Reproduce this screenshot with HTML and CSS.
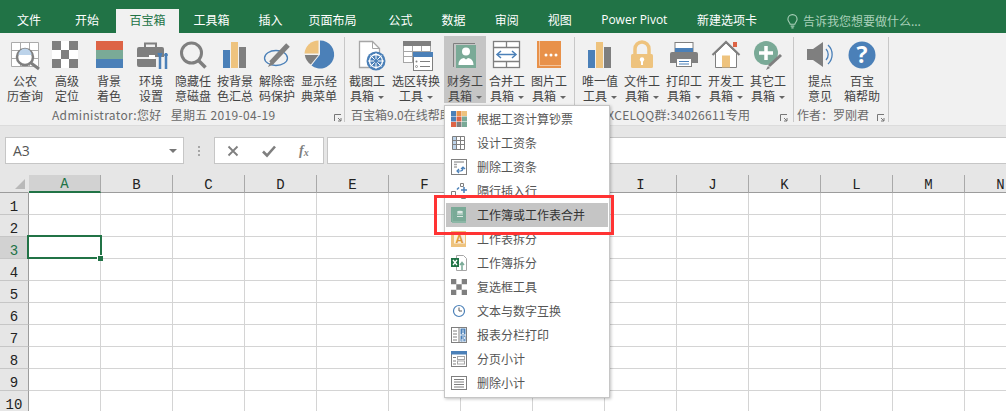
FILE: index.html
```html
<!DOCTYPE html>
<html lang="zh">
<head>
<meta charset="utf-8">
<title>百宝箱</title>
<link rel="stylesheet" href="styles.css">
</head>
<body>
<nav class="tabs">
  <span class="tab tab-first">文件</span>
  <span class="tab">开始</span>
  <span class="tab tab-active">百宝箱</span>
  <span class="tab">工具箱</span>
  <span class="tab">插入</span>
  <span class="tab tab-wide">页面布局</span>
  <span class="tab">公式</span>
  <span class="tab">数据</span>
  <span class="tab">审阅</span>
  <span class="tab">视图</span>
  <span class="tab tab-latin">Power Pivot</span>
  <span class="tab">新建选项卡</span>
  <span class="tell">
    <svg class="bulb" viewBox="0 0 12 16"><path d="M3.5 11C3 9 1 8 1 5.5a5 5 0 0 1 10 0C11 8 9 9 8.500 11z" fill="none" stroke="#a9d0b9" stroke-width="1.200"/><path d="M4 13h4M4.800 15h2.400" stroke="#a9d0b9" stroke-width="1.200"/></svg>
    告诉我您想要做什么...
  </span>
</nav>

<section class="ribbon">
  <div class="group group-one">
    <div class="buttons">
      <div class="btn"><svg class="ico" viewBox="0 0 36 30"><path d="M4.500 2.500h27v24h-27zM4.500 10.500h27M4.500 18.500h27M13.500 2.500v24M22.500 2.500v24" fill="#fff" stroke="#ababab"/><circle cx="18" cy="17" r="8" fill="#fff" stroke="#7f7f7f" stroke-width="2.500"/><path d="M11.500 15a6.500 6.500 0 0 1 13 0z" fill="#bcd3ea"/><path d="M24 23l8 6" stroke="#7f7f7f" stroke-width="3"/></svg><span class="label">公农<br>历查询</span></div>
      <div class="btn"><svg class="ico" viewBox="0 0 36 30"><rect x="3" y="1" width="26" height="27" fill="#fff"/><path d="M3 1h9v9H3zM20 1h9v9h-9zM12 10h8v9h-8zM3 19h9v9H3zM20 19h9v9h-9z" fill="#7f7f7f"/></svg><span class="label">高级<br>定位</span></div>
      <div class="btn"><svg class="ico" viewBox="0 0 36 30"><rect x="5" y="1" width="27" height="9" fill="#dd6446"/><rect x="5" y="10" width="27" height="9" fill="#7aaa97"/><rect x="5" y="19" width="27" height="9" fill="#4b80b8"/></svg><span class="label">背景<br>着色</span></div>
      <div class="btn"><svg class="ico" viewBox="0 0 36 30"><path d="M12 7V3.500h11V7" fill="none" stroke="#7f7f7f" stroke-width="2"/><path d="M4 9a2 2 0 0 1 2-2h23a2 2 0 0 1 2 2v8H4zM4 19h19v8H6a2 2 0 0 1-2-2z" fill="#7f7f7f"/><rect x="16" y="15" width="6" height="4" fill="#fff"/><path d="M27 13v16M33 13v16" stroke="#4b80b8" stroke-width="2.500"/><path d="M25 13l2 4 2-4M31 15h4" fill="none" stroke="#4b80b8" stroke-width="1.500"/></svg><span class="label">环境<br>设置</span></div>
      <div class="btn"><svg class="ico" viewBox="0 0 36 30"><circle cx="16.500" cy="13" r="10" fill="#f1f1f1" stroke="#7f7f7f" stroke-width="3"/><path d="M23.500 20.500l7 7" stroke="#7f7f7f" stroke-width="3.500"/></svg><span class="label">隐藏任<br>意磁盘</span></div>
      <div class="btn"><svg class="ico" viewBox="0 0 36 30"><rect x="6" y="10" width="7" height="18" fill="#4b80b8"/><rect x="14" y="2" width="7" height="26" fill="#eec37e"/><rect x="22" y="7" width="7" height="21" fill="#7f7f7f"/></svg><span class="label">按背景<br>色汇总</span></div>
      <div class="btn"><svg class="ico" viewBox="0 0 36 30"><ellipse cx="17" cy="18" rx="11.500" ry="7.500" fill="none" stroke="#4b80b8" stroke-width="1.300"/><path d="M12 23L29 5" stroke="#7f7f7f" stroke-width="5"/><path d="M9 27l3-6 3 3z" fill="#7f7f7f"/></svg><span class="label">解除密<br>码保护</span></div>
      <div class="btn"><svg class="ico" viewBox="0 0 36 30"><path d="M19 .5a14 14 0 1 1-8.500 25l8.500-11z" fill="#4b80b8"/><path d="M17.500 .5v13H3.500a14 14 0 0 1 14-13z" fill="#eec37e"/><path d="M3.800 15h13.700l-7.700 9.500a14 14 0 0 1-6-9.500z" fill="#7f7f7f"/></svg><span class="label">显示经<br>典菜单</span></div>
    </div>
    <footer class="foot foot-one">Administrator:您好 &nbsp; 星期五 2019-04-19<svg class="launch" viewBox="0 0 8 8"><path d="M.5 7V.5H7M4 4l3 3M7 4v3H4" fill="none" stroke="#777"/></svg></footer>
  </div>

  <div class="group group-two">
    <div class="buttons">
      <div class="btn"><svg class="ico" viewBox="0 0 36 30"><path d="M10.500 1.500h13l7 7v19h-20z" fill="#fff" stroke="#a6a6a6" stroke-width="1.300"/><path d="M23.500 1.500v7h7" fill="none" stroke="#a6a6a6"/><circle cx="27" cy="21" r="9.500" fill="#4b80b8"/><circle cx="27" cy="21" r="6.500" fill="none" stroke="#fff" stroke-width="1.300"/><path d="M27 13v16M19 21h16M21.500 15.500l11 11M32.500 15.500l-11 11" stroke="#fff" stroke-width="1"/><circle cx="27" cy="21" r="2" fill="#4b80b8"/></svg><span class="label">截图工<br>具箱<i class="caret"></i></span></div>
      <div class="btn btn-wide"><svg class="ico" viewBox="0 0 36 30"><rect x="5.500" y="1.500" width="27" height="21" fill="#fff" stroke="#a6a6a6"/><rect x="5" y="1" width="28" height="5" fill="#7f7f7f"/><path d="M5.500 11.500h27M5.500 16.500h27M14.500 6v16M23.500 6v16" stroke="#a6a6a6"/><rect x="15.500" y="12.500" width="19" height="18" fill="#fff" stroke="#7f7f7f"/><rect x="15" y="12" width="20" height="5" fill="#4b80b8"/><path d="M22 21.500h10M22 26.500h10" stroke="#7f7f7f"/><circle cx="18.500" cy="21.500" r="1" fill="#7f7f7f"/><circle cx="18.500" cy="26.500" r="1" fill="none" stroke="#7f7f7f" stroke-width=".8"/></svg><span class="label">选区转换<br>工具<i class="caret"></i></span></div>
      <div class="btn btn-on"><svg class="ico" viewBox="0 0 36 30"><path d="M6.500 27V3.500H28" fill="none" stroke="#7f7f7f"/><rect x="9" y="5" width="20" height="23" fill="#7aaa97"/><circle cx="19" cy="11.500" r="4" fill="#fff"/><path d="M11.500 25c0-5 3-6.500 5.500-7l2 1.500 2-1.500c2.500.5 5.500 2 5.500 7z" fill="#fff"/></svg><span class="label">财务工<br>具箱<i class="caret"></i></span></div>
      <div class="btn"><svg class="ico" viewBox="0 0 36 30"><rect x="4.500" y="1.500" width="26" height="26" fill="#fff" stroke="#7f7f7f" stroke-width="1.300"/><path d="M4.500 7.500h26M4.500 21.500h26M17.500 1.500v6M17.500 21.500v6" stroke="#7f7f7f" stroke-width="1.300"/><path d="M9 14.500h17" stroke="#4b80b8" stroke-width="1.500"/><path d="M12 11l-4 3.500 4 3.500M23 11l4 3.500-4 3.500" fill="none" stroke="#4b80b8" stroke-width="1.500"/></svg><span class="label">合并工<br>具箱<i class="caret"></i></span></div>
      <div class="btn"><svg class="ico" viewBox="0 0 36 30"><rect x="6" y="1" width="24" height="27" fill="#e8914a"/><path d="M8.500 1v24.500H30" fill="none" stroke="#f4c49c"/><circle cx="15" cy="15" r="1.500" fill="#fff"/><circle cx="20" cy="15" r="1.500" fill="#fff"/><circle cx="25" cy="15" r="1.500" fill="#fff"/></svg><span class="label">图片工<br>具箱<i class="caret"></i></span></div>
    </div>
    <footer class="foot foot-two">百宝箱9.0在线帮助</footer>
  </div>

  <div class="group group-three">
    <div class="buttons">
      <div class="btn"><svg class="ico" viewBox="0 0 36 30"><rect x="6" y="10" width="7" height="18" fill="#4b80b8"/><rect x="14" y="2" width="7" height="26" fill="#eec37e"/><rect x="22" y="7" width="7" height="21" fill="#7f7f7f"/></svg><span class="label">唯一值<br>工具<i class="caret"></i></span></div>
      <div class="btn"><svg class="ico" viewBox="0 0 36 30"><path d="M11 15V9a7 7 0 0 1 14 0v6" fill="none" stroke="#eec37e" stroke-width="3.500"/><rect x="7" y="14" width="22" height="14" rx="1.500" fill="#eec37e"/><circle cx="18" cy="19.500" r="2.200" fill="#fff"/><rect x="17" y="20" width="2" height="5" fill="#fff"/></svg><span class="label">文件工<br>具箱<i class="caret"></i></span></div>
      <div class="btn"><svg class="ico" viewBox="0 0 36 30"><rect x="9" y="2.500" width="18" height="10" fill="#fff" stroke="#7f7f7f"/><rect x="9" y="8" width="18" height="4" fill="#4b80b8"/><path d="M6 12h24a2 2 0 0 1 2 2v9H4v-9a2 2 0 0 1 2-2z" fill="#7f7f7f"/><rect x="10.500" y="18.500" width="15" height="8" fill="#fff" stroke="#7f7f7f"/><path d="M13 21.500h10M13 24h10" stroke="#4b80b8"/></svg><span class="label">打印工<br>具箱<i class="caret"></i></span></div>
      <div class="btn"><svg class="ico" viewBox="0 0 36 30"><rect x="25" y="2" width="4" height="5" fill="#dd6446"/><path d="M7.500 13v14.500h21V13L18 3z" fill="#fff" stroke="#7f7f7f"/><path d="M4.500 15L18 2l13.500 13" fill="none" stroke="#7f7f7f" stroke-width="2.200"/><rect x="14" y="15.500" width="8" height="12" fill="#eec37e"/></svg><span class="label">开发工<br>具箱<i class="caret"></i></span></div>
      <div class="btn"><svg class="ico" viewBox="0 0 36 30"><circle cx="16" cy="13" r="12" fill="#7aaa97"/><path d="M16 6v14M9 13h14" stroke="#fff" stroke-width="3.500"/><path d="M19 26l12-11" stroke="#7f7f7f" stroke-width="3"/><path d="M16 30l2-4 2 2z" fill="#7f7f7f"/></svg><span class="label">其它工<br>具箱<i class="caret"></i></span></div>
    </div>
    <footer class="foot foot-three">EXCELQQ群:34026611专用<svg class="launch" viewBox="0 0 8 8"><path d="M.5 7V.5H7M4 4l3 3M7 4v3H4" fill="none" stroke="#777"/></svg></footer>
  </div>

  <div class="group group-four">
    <div class="buttons">
      <div class="btn"><svg class="ico" viewBox="0 0 36 30"><path d="M5 9h6l10-7v25l-10-7H5z" fill="#7f7f7f"/><path d="M24 9a8 8 0 0 1 0 11M26 5a13 13 0 0 1 0 19" fill="none" stroke="#4b80b8" stroke-width="1.300"/></svg><span class="label">提点<br>意见</span></div>
      <div class="btn"><svg class="ico" viewBox="0 0 36 30"><circle cx="18" cy="15" r="13.500" fill="#4b80b8"/><text class="qmark" x="18" y="23" text-anchor="middle">?</text></svg><span class="label">百宝<br>箱帮助</span></div>
    </div>
    <footer class="foot foot-four">作者：罗刚君<svg class="launch" viewBox="0 0 8 8"><path d="M.5 7V.5H7M4 4l3 3M7 4v3H4" fill="none" stroke="#777"/></svg></footer>
  </div>
</section>

<section class="formula">
  <div class="namebox"><span>A3</span><i class="namecaret"></i></div>
  <div class="grip"><i></i><i></i><i></i></div>
  <div class="fxbox">
    <svg class="fxico" viewBox="0 0 12 12"><path d="M1.500 1.500l9 9M10.500 1.500l-9 9" stroke="#7f7f7f" stroke-width="1.800"/></svg>
    <svg class="fxico" viewBox="0 0 14 12"><path d="M1 6.500l4 4 8-9" fill="none" stroke="#7f7f7f" stroke-width="2.600"/></svg>
    <span class="fxtext">f<sub>x</sub></span>
  </div>
  <div class="input"></div>
</section>

<section class="sheet">
  <table class="grid">
    <thead>
      <tr><th class="corner"><i class="tri"></i></th><th class="col-on">A</th><th>B</th><th>C</th><th>D</th><th>E</th><th>F</th><th>G</th><th>H</th><th>I</th><th>J</th><th>K</th><th>L</th><th>M</th><th>N</th></tr>
    </thead>
    <tbody>
      <tr><th>1</th><td></td><td></td><td></td><td></td><td></td><td></td><td></td><td></td><td></td><td></td><td></td><td></td><td></td><td></td></tr>
      <tr><th>2</th><td></td><td></td><td></td><td></td><td></td><td></td><td></td><td></td><td></td><td></td><td></td><td></td><td></td><td></td></tr>
      <tr><th class="row-on">3</th><td></td><td></td><td></td><td></td><td></td><td></td><td></td><td></td><td></td><td></td><td></td><td></td><td></td><td></td></tr>
      <tr><th>4</th><td></td><td></td><td></td><td></td><td></td><td></td><td></td><td></td><td></td><td></td><td></td><td></td><td></td><td></td></tr>
      <tr><th>5</th><td></td><td></td><td></td><td></td><td></td><td></td><td></td><td></td><td></td><td></td><td></td><td></td><td></td><td></td></tr>
      <tr><th>6</th><td></td><td></td><td></td><td></td><td></td><td></td><td></td><td></td><td></td><td></td><td></td><td></td><td></td><td></td></tr>
      <tr><th>7</th><td></td><td></td><td></td><td></td><td></td><td></td><td></td><td></td><td></td><td></td><td></td><td></td><td></td><td></td></tr>
      <tr><th>8</th><td></td><td></td><td></td><td></td><td></td><td></td><td></td><td></td><td></td><td></td><td></td><td></td><td></td><td></td></tr>
      <tr><th>9</th><td></td><td></td><td></td><td></td><td></td><td></td><td></td><td></td><td></td><td></td><td></td><td></td><td></td><td></td></tr>
      <tr><th>10</th><td></td><td></td><td></td><td></td><td></td><td></td><td></td><td></td><td></td><td></td><td></td><td></td><td></td><td></td></tr>
    </tbody>
  </table>
  <div class="selection"><i class="handle"></i></div>
</section>

<ul class="menu">
  <li><svg class="mico" viewBox="0 0 16 16"><rect x="0" y="0" width="5" height="5" fill="#4b80b8"/><rect x="5.500" y="0" width="5" height="5" fill="#e8914a"/><rect x="11" y="0" width="5" height="5" fill="#eec37e"/><rect x="0" y="5.500" width="5" height="5" fill="#4b80b8"/><rect x="5.500" y="5.500" width="5" height="5" fill="#dd6446"/><rect x="11" y="5.500" width="5" height="5" fill="#7aaa97"/><rect x="0" y="11" width="5" height="5" fill="#dd6446"/><rect x="5.500" y="11" width="5" height="5" fill="#7f7f7f"/><rect x="11" y="11" width="5" height="5" fill="#7aaa97"/></svg>根据工资计算钞票</li>
  <li><svg class="mico" viewBox="0 0 16 16"><rect x="1.500" y="1.500" width="4" height="13" fill="#bcd3ea"/><path d="M1.500 1.500h12v13h-12zM1.500 5.500h12M1.500 9.500h12M5.500 1.500v13M9.500 1.500v13" fill="none" stroke="#7f7f7f"/></svg>设计工资条</li>
  <li><svg class="mico" viewBox="0 0 16 16"><rect x=".5" y=".5" width="15" height="15" fill="#fff" stroke="#7f7f7f"/><path d="M3 3h10M3 5.500h3M3 8h3" stroke="#a6a6a6" stroke-width="1.300"/><path d="M6 12h3.500c2 0 2.500-1 2.500-3M10 10l2-2 2 2M8 10l-2 2 2 2" fill="none" stroke="#4b80b8" stroke-width="1.200"/></svg>删除工资条</li>
  <li><svg class="mico" viewBox="0 0 16 16"><path d="M.5 8.500h4v4h-4zM10.500 12.500h4v3h-4zM9.500 .5h3v3h-3z" fill="#fff" stroke="#7f7f7f"/><path d="M6 6.500l2-2M13 4v6M10 7h6" stroke="#4b80b8" stroke-width="1.500"/></svg>隔行插入行</li>
  <li class="item-on"><svg class="mico" viewBox="0 0 16 16"><rect x="0" y="0" width="15" height="15" fill="#7aaa97"/><path d="M2 0v14h13v2H1z" fill="#8cb7a6"/><ellipse cx="9" cy="5" rx="3" ry="1.300" fill="#dfe9e5"/><path d="M6 6.500h6v1H6zM6 9h6v1H6z" fill="#dfe9e5"/></svg>工作簿或工作表合并</li>
  <li><svg class="mico" viewBox="0 0 16 16"><rect x="0" y="0" width="15" height="16" fill="#eec37e"/><rect x="3" y="1.500" width="11" height="11" fill="#fbf0df"/><text class="mletter" x="8.500" y="11.500" text-anchor="middle">A</text></svg>工作表拆分</li>
  <li><svg class="mico" viewBox="0 0 16 16"><path d="M5.500 .5h7l3 3v12h-10z" fill="#fff" stroke="#a6a6a6"/><rect x="0" y="3" width="8" height="9" fill="#217346"/><path d="M2 5l4 5M6 5l-4 5" stroke="#fff" stroke-width="1.300"/><path d="M11 15V8M9 10l2-2.500 2 2.500" fill="none" stroke="#7aaa97" stroke-width="1.500"/></svg>工作簿拆分</li>
  <li><svg class="mico" viewBox="0 0 16 16"><path d="M0 0h16v16H0z" fill="#fff"/><path d="M0 0h5.300v5.300H0zM10.700 0H16v5.300h-5.300zM5.300 5.300h5.400v5.400H5.300zM0 10.700h5.300V16H0zM10.700 10.700H16V16h-5.300z" fill="#7f7f7f"/></svg>复选框工具</li>
  <li><svg class="mico" viewBox="0 0 16 16"><circle cx="8" cy="8" r="5.500" fill="none" stroke="#4b80b8" stroke-width="1.200"/><path d="M8 4.500V8h3" fill="none" stroke="#5a5a5a"/></svg>文本与数字互换</li>
  <li><svg class="mico" viewBox="0 0 16 16"><rect x=".5" y=".5" width="15" height="15" fill="#fff" stroke="#7f7f7f"/><path d="M8 .5v15M2 4h4M2 7h4M2 10h4M2 13h4" stroke="#7f7f7f"/><rect x="9.500" y="1.500" width="5" height="6" fill="#4b80b8"/><rect x="9.500" y="8.500" width="5" height="6" fill="#4b80b8"/><path d="M12 2.500v4M11 6.500h2M11 10h2.500v2H11v2h2.500" fill="none" stroke="#fff" stroke-width=".8"/></svg>报表分栏打印</li>
  <li><svg class="mico" viewBox="0 0 16 16"><rect x=".5" y=".5" width="15" height="15" fill="#fff" stroke="#7f7f7f"/><rect x="0" y="0" width="16" height="3.500" fill="#4b80b8"/><path d="M2 6.500h3M2 10h3M2 13h3" stroke="#7f7f7f"/><rect x="6.500" y="5.500" width="7" height="3" fill="none" stroke="#a6a6a6"/><rect x="6.500" y="10" width="7" height="3" fill="none" stroke="#a6a6a6"/></svg>分页小计</li>
  <li><svg class="mico" viewBox="0 0 16 16"><rect x=".5" y="1.500" width="15" height="13" fill="#fff" stroke="#7f7f7f"/><path d="M3 4.500h10M3 7h10M3 9.500h10M3 12h10" stroke="#7f7f7f"/></svg>删除小计</li>
</ul>
<div class="callout"></div>
</body>
</html>
```
FILE: styles.css
```css
* { box-sizing: border-box; }
html, body { margin: 0; padding: 0; }
body {
  position: relative;
  width: 1006px;
  height: 411px;
  overflow: hidden;
  background: #fff;
  font-family: "Noto Sans CJK SC", "Open Sans", sans-serif;
  font-size: 12px;
  color: #444;
}

/* tabs */
.tabs {
  display: flex;
  align-items: flex-end;
  height: 33px;
  padding-left: 2.5px;
  background: #217346;
  color: #fff;
}
.tab {
  height: 24px;
  line-height: 22px;
  padding: 0 14.5px;
  white-space: nowrap;
}
.tab-first { margin-right: 5px; }
.tab-wide { margin-left: -3px; margin-right: 3px; }
.tab-latin { font-family: "Open Sans", sans-serif; padding: 0 15px; }
.tab-active { background: #f1f1f1; color: #217346; padding: 0 13.5px; margin: 0 0 0 2.5px; }
.tell {
  display: flex;
  align-items: center;
  gap: 5px;
  height: 24px;
  line-height: 22px;
  margin-left: 15.5px;
  color: #a9d0b9;
}
.bulb { width: 11px; height: 15px; }

/* ribbon */
.ribbon {
  display: flex;
  height: 93px;
  background: #f1f1f1;
  border-bottom: 1px solid #dcdcdc;
}
.group {
  position: relative;
  display: flex;
  flex-direction: column;
  padding-top: 3px;
  height: 89px;
}
.group::after {
  content: "";
  position: absolute;
  right: 0;
  top: 4px;
  bottom: 0;
  width: 1px;
  background: #c8c8c8;
}
.group-one { width: 345px; padding-left: 4px; }
.group-two { width: 230px; padding-left: 1px; }
.group-three { width: 219px; padding-left: 4px; }
.group-four { width: 95px; padding-left: 5px; }
.buttons { display: flex; height: 69px; }
.btn {
  width: 42px;
  display: flex;
  flex-direction: column;
  align-items: center;
  padding-top: 4px;
}
.btn-wide { width: 56px; }
.btn-on { background: #c5c5c5; }
.ico { width: 36px; height: 30px; flex: none; overflow: visible; }
.label {
  margin-top: 3px;
  line-height: 15px;
  text-align: center;
  white-space: nowrap;
  color: #444;
}
.caret {
  display: inline-block;
  width: 0;
  height: 0;
  margin-left: 4px;
  vertical-align: 2px;
  border-left: 3px solid transparent;
  border-right: 3px solid transparent;
  border-top: 3px solid #666;
}
.qmark { font: bold 23px "Open Sans", sans-serif; fill: #fff; }

.foot {
  position: relative;
  flex: 1;
  line-height: 17px;
  padding-top: 3px;
  color: #6a6a6a;
  white-space: nowrap;
}
.foot-one { padding-left: 48px; letter-spacing: .32px; }
.foot-two { padding-left: 5px; }
.foot-three { padding-left: 21px; letter-spacing: .28px; }
.foot-four { margin-left: -2px; }
.launch {
  position: absolute;
  right: 3px;
  bottom: 1px;
  width: 8px;
  height: 8px;
}
.group-three .launch { right: 6px; }
.group-four .launch { right: 4px; }

/* formula bar */
.formula {
  display: flex;
  align-items: stretch;
  height: 49px;
  padding: 11px 0;
  background: #e6e6e6;
}
.namebox {
  display: flex;
  align-items: center;
  justify-content: space-between;
  width: 179px;
  margin-left: 5px;
  padding: 0 6px 0 7px;
  background: #fff;
  border: 1px solid #c6c6c6;
  font: 14px "Open Sans", sans-serif;
  color: #555;
}
.namecaret {
  width: 0;
  height: 0;
  border-left: 4px solid transparent;
  border-right: 4px solid transparent;
  border-top: 4px solid #777;
}
.grip {
  display: flex;
  flex-direction: column;
  justify-content: center;
  align-items: center;
  gap: 2px;
  width: 30px;
}
.grip i { width: 2px; height: 2px; background: #a6a6a6; }
.fxbox {
  display: flex;
  align-items: center;
  width: 110px;
  padding-left: 12px;
  gap: 17px;
  background: #fff;
  border: 1px solid #c6c6c6;
}
.fxico { width: 12px; height: 12px; overflow: visible; }
.fxico + .fxico { width: 14px; margin-left: 6px; }
.fxtext {
  margin-left: 6px;
  font: italic bold 14px "Liberation Serif", serif;
  color: #7f7f7f;
}
.fxtext sub { font-size: 10px; vertical-align: -1px; }
.input {
  flex: 1;
  margin-left: 3px;
  background: #fff;
  border: 1px solid #c6c6c6;
  border-right: 0;
}

/* sheet */
.sheet { position: relative; height: 236px; overflow: hidden; }
.grid {
  border-collapse: separate;
  border-spacing: 0;
  table-layout: fixed;
  width: 1037px;
}
.grid thead tr { height: 18px; }
.grid tbody tr { height: 22px; }
.grid thead th {
  width: 72px;
  padding: 0;
  vertical-align: bottom;
  background: #e6e6e6;
  border-right: 1px solid #a9a9a9;
  border-bottom: 1px solid #9c9c9c;
  font: 14px/13px "Liberation Mono", monospace;
  color: #222;
}
.grid thead .corner { width: 29px; position: relative; border-right: 1px solid #e6e6e6; }
.tri {
  position: absolute;
  right: 3px;
  bottom: 3px;
  width: 0;
  height: 0;
  border-left: 10px solid transparent;
  border-bottom: 10px solid #b9b9b9;
}
.grid thead .col-on {
  background: #d2d2d2;
  color: #217346;
  border-bottom: 2px solid #217346;
}
.grid tbody th {
  padding: 0;
  vertical-align: bottom;
  background: #e6e6e6;
  border-right: 1px solid #9c9c9c;
  border-bottom: 1px solid #c6c6c6;
  font: 14px/14px "Liberation Mono", monospace;
  color: #222;
}
.grid tbody .row-on { background: #d2d2d2; color: #217346; }
.grid td {
  padding: 0;
  border-right: 1px solid #d4d4d4;
  border-bottom: 1px solid #d4d4d4;
}
.selection {
  position: absolute;
  left: 27px;
  top: 60px;
  width: 75px;
  height: 24px;
  border: 2px solid #217346;
}
.handle {
  position: absolute;
  right: -3px;
  bottom: -4px;
  width: 6px;
  height: 6px;
  background: #217346;
  border: 1px solid #fff;
  border-right: 0;
  border-bottom: 0;
}

/* menu */
.menu {
  position: absolute;
  left: 444px;
  top: 105px;
  width: 166px;
  margin: 0;
  padding: 1px 1px 2px;
  list-style: none;
  background: #fff;
  border: 1px solid #c6c6c6;
  box-shadow: 1px 1px 3px rgba(0, 0, 0, .25);
}
.menu li {
  display: flex;
  align-items: center;
  height: 24px;
  padding-left: 5px;
  padding-bottom: 1px;
  line-height: 22px;
  color: #555;
  white-space: nowrap;
}
.menu .item-on { background: #c5c5c5; color: #333; }
.mico { width: 16px; height: 16px; margin-right: 10px; flex: none; }
.mletter { font: bold 11px "Open Sans", sans-serif; fill: #dd9b3a; }

.callout {
  position: absolute;
  left: 434px;
  top: 195px;
  width: 180px;
  height: 40px;
  border: 3px solid #ff3333;
}
```
